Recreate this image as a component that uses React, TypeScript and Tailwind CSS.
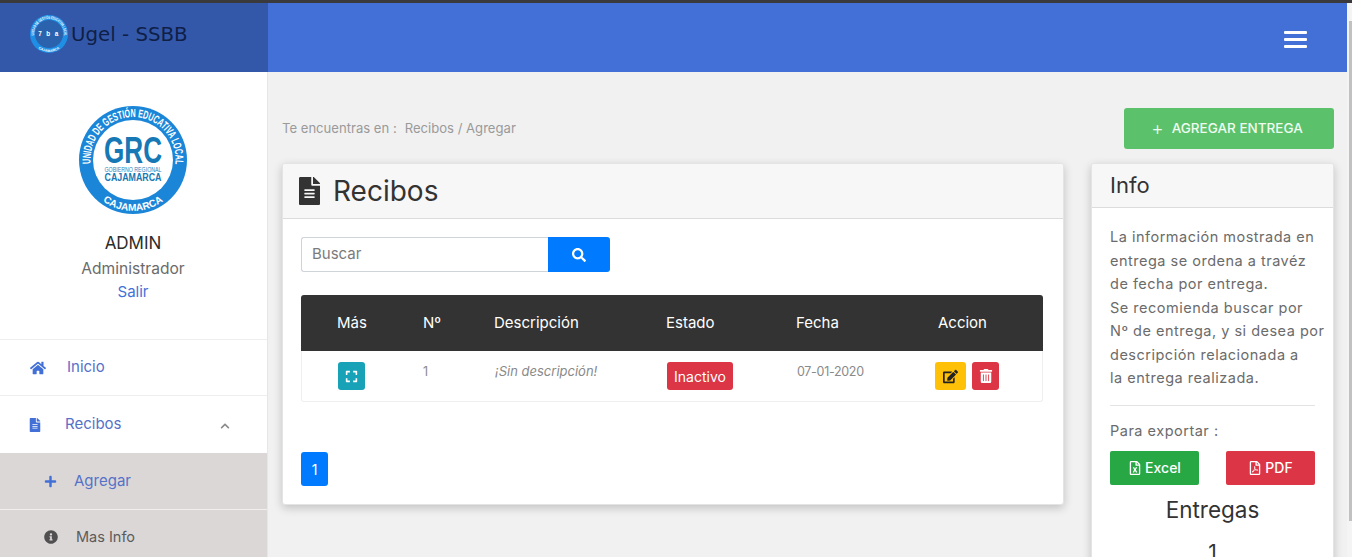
import React from "react";
import { FaHome, FaFileAlt, FaPlus, FaInfoCircle, FaChevronUp, FaSearch, FaExpand, FaEdit, FaTrashAlt, FaRegFileExcel, FaRegFilePdf } from "react-icons/fa";

function Logo({ size, small }: { size: number; small?: boolean }) {
  const t = small ? "tops" : "top";
  const b = small ? "bots" : "bot";
  return (
    <svg width={size} height={size} viewBox="0 0 108 108" className="shrink-0">
      <defs>
        <path id={t} d="M 11.7 57.7 A 42.5 42.5 0 1 1 96.3 57.7" fill="none" />
        <path id={b} d="M 15 86.8 A 51 51 0 0 0 93 86.8" fill="none" />
      </defs>
      <circle cx="54" cy="54" r="54" fill={small ? "#1f8fe6" : "#1b86d8"} />
      <circle cx="54" cy="54" r="40" fill={small ? "#2a62ae" : "#ffffff"} />
      <text fontFamily="'Liberation Sans', sans-serif" fontWeight="700" fontSize="11.5" fill="#fff">
        <textPath href={`#${t}`} textLength="142" lengthAdjust="spacingAndGlyphs">UNIDAD DE GESTIÓN EDUCATIVA LOCAL</textPath>
      </text>
      <text fontFamily="'Liberation Sans', sans-serif" fontWeight="700" fontSize="10" fill="#fff" textAnchor="middle">
        <textPath href={`#${b}`} startOffset="50%">CAJAMARCA</textPath>
      </text>
      {!small && (
        <>
          <text x="54" y="57" textAnchor="middle" fontFamily="'Liberation Sans', sans-serif" fontWeight="700" fontSize="36" fill="#1678b4" textLength="58" lengthAdjust="spacingAndGlyphs">GRC</text>
          <text x="54" y="65.5" textAnchor="middle" fontFamily="'Liberation Sans', sans-serif" fontSize="6.5" fill="#2c86bd" textLength="57" lengthAdjust="spacingAndGlyphs">GOBIERNO REGIONAL</text>
          <text x="54" y="74.5" textAnchor="middle" fontFamily="'Liberation Sans', sans-serif" fontSize="10.5" fontWeight="700" fill="#1678b4" textLength="57" lengthAdjust="spacingAndGlyphs">CAJAMARCA</text>
        </>
      )}
      {small && (
        <text x="54" y="60" textAnchor="middle" fontFamily="'Liberation Sans', sans-serif" fontWeight="700" fontSize="18" fill="#fff" letterSpacing="4">7 b a</text>
      )}
    </svg>
  );
}

const font = "font-['Inter','Liberation_Sans',sans-serif]";

export default function App() {
  return (
    <div className={`h-[557px] w-[1352px] overflow-hidden flex flex-col bg-[#f1f1f1] ${font}`}>
      <div className="h-[3px] bg-[#3a3a3c] shrink-0" />
      <div className="flex-1 flex min-h-0">
        <div className="w-[1347px] flex flex-col min-h-0 overflow-hidden">
          <header className="h-[69px] shrink-0 flex bg-[#4270d6]">
            <div className="w-[268px] bg-[#3458a9] flex pl-[30px] pt-[12px]">
              <Logo size={38} small />
              <span className="ml-[3px] mt-[6px] h-[28px] text-[19.8px] leading-[28px] text-[#0f1f48] font-['DejaVu_Sans',sans-serif]">Ugel - SSBB</span>
            </div>
            <div className="flex-1 flex justify-end items-start pr-[40px] pt-[28px]">
              <div className="w-[23px] flex flex-col gap-[4px]">
                <span className="h-[3px] bg-white rounded-[1px]" />
                <span className="h-[3px] bg-white rounded-[1px]" />
                <span className="h-[3px] bg-white rounded-[1px]" />
              </div>
            </div>
          </header>
          <div className="flex-1 flex min-h-0">
            <aside className="w-[268px] shrink-0 bg-white border-r border-[#e6e6e6] flex flex-col">
              <div className="h-[268px] shrink-0 flex flex-col items-center pt-[34px] pr-[1px] border-b border-[#eeeeee]">
                <Logo size={108} />
                <div className="mt-[17px] text-[17px] leading-[24px] text-[#2c2c2c]">ADMIN</div>
                <div className="mt-[3px] text-[15.6px] leading-[22px] text-[#6b6b6b]">Administrador</div>
                <div className="mt-[1px] text-[15px] leading-[22px] text-[#3f72d8]">Salir</div>
              </div>
              <div className="h-[56px] shrink-0 flex items-center pl-[30px] border-b border-[#eeeeee] text-[#4270d6]">
                <FaHome size={16} />
                <span className="ml-[21px] text-[15px] text-[#5572c8]">Inicio</span>
              </div>
              <div className="h-[57px] shrink-0 flex items-center pl-[28px] text-[#4270d6]">
                <FaFileAlt size={14} />
                <span className="ml-[23px] text-[15px] text-[#5572c8]">Recibos</span>
                <FaChevronUp size={10} className="ml-[99px] mt-[3px] text-[#8a8a8a]" />
              </div>
              <div className="h-[57px] shrink-0 flex items-center pl-[44px] bg-[#dcd7d7] border-b border-[#f0eeee] text-[#4270d6]">
                <FaPlus size={13} />
                <span className="ml-[17px] text-[15px] text-[#5572c8]">Agregar</span>
              </div>
              <div className="h-[56px] shrink-0 flex items-center pl-[44px] pb-[2px] bg-[#dcd7d7]">
                <FaInfoCircle size={14} className="text-[#505050]" />
                <span className="ml-[18px] text-[14.5px] text-[#5b5b5b]">Mas Info</span>
              </div>
            </aside>
            <main className="flex-1 min-w-0 pl-[14px] pr-[13px] pt-[36px] overflow-hidden">
              <div className="flex items-center justify-between h-[41px]">
                <div className="text-[13.1px] pt-[1px] text-[#9a9a9a] flex">
                  <span>Te encuentras en :</span>
                  <span className="ml-[8px]">Recibos / Agregar</span>
                </div>
                <button className="w-[210px] h-[41px] pr-[4px] bg-[#5cc16b] rounded-[3px] text-[#eefbf0] text-[13.5px] font-medium flex items-center justify-center gap-[8px]">
                  <span className="text-[19px] leading-none font-light">+</span>
                  <span>AGREGAR ENTREGA</span>
                </button>
              </div>
              <div className="flex items-start mt-[14px]">
                <section className="w-[782px] h-[342px] shrink-0 bg-white rounded-[3px] border border-[#e4e4e4] shadow-[0_3px_10px_rgba(0,0,0,0.2)] flex flex-col">
                  <div className="h-[55px] shrink-0 bg-[#f7f7f7] border-b border-[#dcdcdc] flex items-center pl-[16px] rounded-t-[3px]">
                    <FaFileAlt className="w-[21px] h-[28px] text-[#333333]" />
                    <h1 className="ml-[13px] text-[28px] leading-none text-[#333333]">Recibos</h1>
                  </div>
                  <div className="flex-1 px-[18px] pt-[18px]">
                    <div className="flex w-[309px] h-[35px]">
                      <div className="flex-1 border border-[#cfd4d9] border-r-0 rounded-l-[3px] flex items-center pl-[10px] text-[15px] text-[#7b7b7b]">Buscar</div>
                      <div className="w-[62px] bg-[#007bff] rounded-r-[3px] flex items-center justify-center text-white">
                        <FaSearch size={14} />
                      </div>
                    </div>
                    <div className="mt-[23px] w-[742px] rounded-[3px] border border-[#efefef] border-t-0">
                      <div className="h-[56px] -mx-px bg-[#333333] rounded-t-[3px] grid grid-cols-[101px_71px_172px_130px_142px_1fr] items-center text-[15px] text-white">
                        <div className="pl-[36px]">Más</div>
                        <div className="pl-[21px]">Nº</div>
                        <div className="pl-[21px]">Descripción</div>
                        <div className="pl-[21px]">Estado</div>
                        <div className="pl-[21px]">Fecha</div>
                        <div className="pl-[21px]">Accion</div>
                      </div>
                      <div className="h-[50px] -mx-px grid grid-cols-[101px_71px_172px_130px_142px_1fr] items-start pt-[11px] text-[12.5px] text-[#8a8a8a]">
                        <div className="pl-[37px]">
                          <div className="w-[27px] h-[28px] bg-[#17a2b8] rounded-[3px] flex items-center justify-center text-white"><FaExpand size={13} /></div>
                        </div>
                        <div className="pl-[21px] leading-[19px]">1</div>
                        <div className="pl-[22px] leading-[19px] italic text-[13px]">¡Sin descripción!</div>
                        <div className="pl-[22px]">
                          <div className="w-[66px] h-[28px] bg-[#dc3545] rounded-[3px] flex items-center justify-center text-white text-[14px]">Inactivo</div>
                        </div>
                        <div className="pl-[22px] leading-[19px] tracking-[-0.3px]">07-01-2020</div>
                        <div className="flex gap-[6px] ml-[18px]">
                          <div className="w-[31px] h-[28px] bg-[#ffc107] rounded-[3px] flex items-center justify-center text-[#222222]"><FaEdit size={15} /></div>
                          <div className="w-[27px] h-[28px] bg-[#dc3545] rounded-[3px] flex items-center justify-center text-white"><FaTrashAlt size={14} /></div>
                        </div>
                      </div>
                    </div>
                    <div className="mt-[50px] w-[27px] h-[34px] bg-[#007bff] rounded-[3px] flex items-center justify-center text-white text-[14px]">1</div>
                  </div>
                </section>
                <aside className="ml-[27px] w-[243px] shrink-0 bg-white rounded-[3px] border border-[#e4e4e4] shadow-[0_3px_10px_rgba(0,0,0,0.2)]">
                  <div className="h-[44px] bg-[#f7f7f7] border-b border-[#dcdcdc] flex items-center pl-[18px] text-[22px] text-[#333333] rounded-t-[3px]">Info</div>
                  <div className="px-[18px] pt-[17px]">
                    <p className="text-[14.5px] tracking-[0.5px] leading-[23.5px] text-[#6b6b6b] whitespace-nowrap">
                      La información mostrada en<br />
                      entrega se ordena a travéz<br />
                      de fecha por entrega.<br />
                      Se recomienda buscar por<br />
                      Nº de entrega, y si desea por<br />
                      descripción relacionada a<br />
                      la entrega realizada.
                    </p>
                    <div className="mt-[15px] border-t border-[#e4e4e4]" />
                    <div className="mt-[14px] text-[14.5px] tracking-[0.5px] leading-[22px] text-[#6b6b6b]">Para exportar :</div>
                    <div className="mt-[9px] flex justify-between">
                      <div className="w-[89px] h-[34px] bg-[#28a745] rounded-[2px] flex items-center justify-center gap-[3px] text-white text-[14px] font-medium"><FaRegFileExcel size={14} />Excel</div>
                      <div className="w-[89px] h-[34px] bg-[#dc3545] rounded-[2px] flex items-center justify-center gap-[3px] text-white text-[14px] font-medium"><FaRegFilePdf size={14} />PDF</div>
                    </div>
                    <div className="mt-[10px] text-center text-[22.5px] leading-[30px] text-[#333333]">Entregas</div>
                    <div className="mt-[13px] text-center text-[21px] leading-[30px] text-[#333333]">1</div>
                  </div>
                </aside>
              </div>
            </main>
          </div>
        </div>
        <div className="w-[5px] shrink-0 bg-[#f4f4f4] flex justify-end">
          <div className="w-[3px] mt-[18px] h-[500px] bg-[#c1c1c1]" />
        </div>
      </div>
    </div>
  );
}
